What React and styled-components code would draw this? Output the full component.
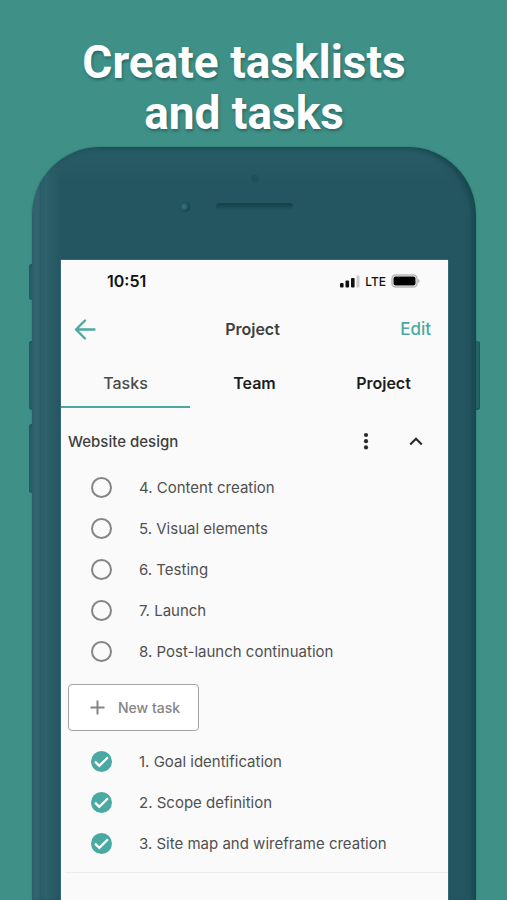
import React, { useState } from "react";
import styled, { createGlobalStyle, css } from "styled-components";

const color = {
  page: "#3f9188",
  phone: "#245661",
  screen: "#fafafa",
  accent: "#4aa9a2",
  ink: "#3f3f3f",
  task: "#505050",
};

const GlobalStyle = createGlobalStyle`
  *, *::before, *::after { box-sizing: border-box; }
  html, body, #root { height: 100%; }
  body {
    margin: 0;
    background: ${color.page};
    font-family: Inter, "Liberation Sans", sans-serif;
  }
  button { font: inherit; }
`;

const Page = styled.main`
  display: flex;
  flex-direction: column;
  min-height: 100vh;
  padding: 37px 31px 0 32px;
  gap: 8px;
  overflow: hidden;
`;

const Headline = styled.h1`
  margin: 0;
  padding-right: 20px;
  color: #fff;
  font: 700 46px/51px Roboto, sans-serif;
  text-align: center;
  text-shadow: 1px 2px 3px rgba(20, 60, 60, 0.5);
`;

const Phone = styled.section`
  position: relative;
  flex: 1;
  display: flex;
  flex-direction: column;
  padding: 0 28px 0 29px;
  border-radius: 68px 68px 0 0;
  background:
    linear-gradient(90deg, #2c616b 0, #33656f 5px, #2c606b 8px, #255761 9px, #30636e 10px, #2c5f6a 11px, #275a65 12px, #30636e 13px, #2b5d68 18px, rgba(36, 86, 97, 0) 29px),
    linear-gradient(180deg, #285c66 0, ${color.phone} 36px);
  box-shadow:
    inset -5px 2px 5px -1px #18474f,
    0 0 2px rgba(22, 72, 77, 0.5);
`;

const SideKey = styled.span`
  position: absolute;
  z-index: -1;
  top: ${(p) => p.$top}px;
  height: ${(p) => p.$length}px;
  width: 6px;
  border-radius: 3px;
  background: #27646a;
  ${(p) =>
    p.$side === "left"
      ? css`left: -3px; box-shadow: inset 1px 1px 1px #1e5a60;`
      : css`right: -4px; box-shadow: inset -1px -1px 1px #1b535a;`}
`;

const Bezel = styled.div`
  height: 113px;
  display: flex;
  justify-content: center;
`;

const BezelArt = styled.svg`
  display: block;
  width: 150px;
  height: 80px;
`;

const Screen = styled.div`
  flex: 1;
  background: ${color.screen};
  box-shadow: 0 0 1px #8fc5c3;
`;

const StatusBar = styled.div`
  display: flex;
  align-items: center;
  justify-content: space-between;
  height: 42px;
  padding: 0 28px 0 46px;
  color: #111;
  font-size: 16px;
  font-weight: 600;
`;

const StatusIcons = styled.div`
  display: flex;
  align-items: center;
  gap: 5px;
  font-size: 12px;
  font-weight: 500;
  svg { display: block; }
`;

const Header = styled.header`
  display: grid;
  grid-template-columns: 1fr auto 1fr;
  align-items: center;
  height: 54px;
  padding: 0 17px 0 13px;
`;

const Title = styled.h2`
  margin: 0;
  color: ${color.ink};
  font-size: 16px;
  font-weight: 600;
`;

const PlainButton = styled.button`
  display: grid;
  place-items: center;
  padding: 0;
  border: 0;
  background: none;
  color: ${(p) => (p.$accent ? color.accent : "#2b2b2b")};
  font-size: 17px;
  font-weight: 500;
  cursor: pointer;
  justify-self: ${(p) => p.$align || "auto"};
  svg { display: block; }
`;

const Tabs = styled.div`
  display: grid;
  grid-template-columns: repeat(3, 1fr);
`;

const Tab = styled.button`
  height: 52px;
  padding: 3px 0 0;
  border: 0;
  border-bottom: 2px solid ${(p) => (p.$active ? color.accent : "transparent")};
  background: none;
  color: ${(p) => (p.$active ? "#4a4a4a" : "#1d1d1d")};
  font-size: 16px;
  font-weight: ${(p) => (p.$active ? 500 : 600)};
  cursor: pointer;
`;

const ListHeader = styled.div`
  display: flex;
  align-items: center;
  height: 59px;
  padding: 7px 20px 0 7px;
  gap: 28px;
`;

const ListTitle = styled.h3`
  flex: 1;
  margin: 0;
  color: ${color.ink};
  font-size: 15px;
  font-weight: 500;
`;

const TaskList = styled.ul`
  margin: 0;
  padding: 0;
  list-style: none;
`;

const TaskRow = styled.label`
  display: flex;
  align-items: center;
  gap: 27px;
  height: 41px;
  padding: 0 8px 0 30px;
  color: ${color.task};
  font-size: 15px;
  white-space: nowrap;
  cursor: pointer;
`;

const Tick = styled.span`
  display: grid;
  > * { grid-area: 1 / 1; }
  svg { pointer-events: none; }
`;

const TickInput = styled.input`
  appearance: none;
  width: 21px;
  height: 21px;
  margin: 0;
  border: 2px solid #858585;
  border-radius: 50%;
  cursor: pointer;
  &:checked {
    border-color: ${color.accent};
    background: ${color.accent};
  }
`;

const NewTask = styled.button`
  display: flex;
  align-items: center;
  gap: 12px;
  height: 47px;
  margin: 12px 0 10px 7px;
  padding: 0 18px 0 20px;
  border: 1px solid #a3a3a3;
  border-radius: 4px;
  background: #fff;
  color: #858585;
  font-size: 14px;
  font-weight: 500;
  cursor: pointer;
`;

const Divider = styled.hr`
  margin: 8px 0 0 4px;
  border: 0;
  border-top: 1px solid #ececec;
`;

const SIDE_KEYS = [
  { side: "left", top: 117, length: 36 },
  { side: "left", top: 194, length: 69 },
  { side: "left", top: 277, length: 69 },
  { side: "right", top: 194, length: 69 },
];

const TABS = ["Tasks", "Team", "Project"];

const TASKS = [
  { title: "4. Content creation", done: false },
  { title: "5. Visual elements", done: false },
  { title: "6. Testing", done: false },
  { title: "7. Launch", done: false },
  { title: "8. Post-launch continuation", done: false },
  { title: "1. Goal identification", done: true },
  { title: "2. Scope definition", done: true },
  { title: "3. Site map and wireframe creation", done: true },
];

function Task({ title, done, onToggle }) {
  return (
    <li>
      <TaskRow>
        <Tick>
          <TickInput type="checkbox" checked={done} onChange={onToggle} />
          {done && (
            <svg width="21" height="21" viewBox="0 0 21 21" fill="none" stroke="#fff" strokeWidth="2.3" aria-hidden="true">
              <path d="M4 10.6 8.3 14.8 17 6.2" />
            </svg>
          )}
        </Tick>
        {title}
      </TaskRow>
    </li>
  );
}

export default function App() {
  const [active, setActive] = useState("Tasks");
  const [tasks, setTasks] = useState(TASKS);
  const toggle = (title) =>
    setTasks((all) => all.map((t) => (t.title === title ? { ...t, done: !t.done } : t)));
  const renderTasks = (done) =>
    tasks
      .filter((t) => t.done === done)
      .map((t) => <Task key={t.title} {...t} onToggle={() => toggle(t.title)} />);

  return (
    <>
      <GlobalStyle />
      <Page>
        <Headline>
          Create tasklists
          <br />
          and tasks
        </Headline>
        <Phone>
          {SIDE_KEYS.map((k) => (
            <SideKey key={k.side + k.top} $side={k.side} $top={k.top} $length={k.length} />
          ))}
          <Bezel>
            <BezelArt viewBox="0 0 150 80" aria-hidden="true">
              <defs>
                <radialGradient id="lens" cx="0.4" cy="0.45" r="0.6">
                  <stop offset="0" stopColor="#3b7883" />
                  <stop offset="0.45" stopColor="#25606a" />
                  <stop offset="1" stopColor="#133f49" />
                </radialGradient>
                <linearGradient id="slot" x1="0" y1="0" x2="0" y2="1">
                  <stop offset="0" stopColor="#153f49" />
                  <stop offset="0.5" stopColor="#1b4a54" />
                  <stop offset="1" stopColor="#225460" />
                </linearGradient>
              </defs>
              <circle cx="75" cy="32" r="4" fill="#1f4f59" />
              <circle cx="5" cy="60" r="5" fill="url(#lens)" />
              <rect x="36" y="56" width="77" height="7" rx="3.5" fill="url(#slot)" />
            </BezelArt>
          </Bezel>
          <Screen>
            <StatusBar>
              <span>10:51</span>
              <StatusIcons>
                <svg width="20" height="13" viewBox="0 0 20 13" aria-hidden="true">
                  <rect x="0" y="8" width="3.6" height="4.5" rx="1" fill="#111" />
                  <rect x="5.5" y="5.5" width="3.6" height="7" rx="1" fill="#111" />
                  <rect x="11" y="3" width="3.6" height="9.5" rx="1" fill="#111" />
                  <rect x="16.5" y="0.5" width="3" height="12" rx="1" fill="#ccc" />
                </svg>
                LTE
                <svg width="29" height="14" viewBox="0 0 29 14" aria-hidden="true">
                  <rect x="1" y="1" width="25" height="12" rx="3.5" fill="#fafafa" stroke="#b8b8b8" strokeWidth="1.5" />
                  <rect x="2.5" y="2.5" width="22" height="9" rx="2" fill="#000" />
                  <path d="M27.3 5v4c1.5-.6 1.5-3.4 0-4z" fill="#999" />
                </svg>
              </StatusIcons>
            </StatusBar>
            <Header>
              <PlainButton type="button" $accent $align="start" aria-label="Back">
                <svg width="22" height="22" viewBox="0 0 22 22" fill="none" stroke="currentColor" strokeWidth="2.3" strokeLinecap="round" strokeLinejoin="round" aria-hidden="true">
                  <path d="M20.5 11.5H2M11 2.5 2 11.5 11 20.5" />
                </svg>
              </PlainButton>
              <Title>Project</Title>
              <PlainButton type="button" $accent $align="end">Edit</PlainButton>
            </Header>
            <Tabs role="tablist">
              {TABS.map((name) => (
                <Tab
                  key={name}
                  type="button"
                  role="tab"
                  aria-selected={name === active}
                  $active={name === active}
                  onClick={() => setActive(name)}
                >
                  {name}
                </Tab>
              ))}
            </Tabs>
            <ListHeader>
              <ListTitle>Website design</ListTitle>
              <PlainButton type="button" aria-label="List options">
                <svg width="20" height="20" viewBox="0 0 20 20" fill="currentColor" aria-hidden="true">
                  <circle cx="10" cy="4" r="2.1" />
                  <circle cx="10" cy="10.2" r="2.1" />
                  <circle cx="10" cy="16.4" r="2.1" />
                </svg>
              </PlainButton>
              <PlainButton type="button" aria-label="Collapse list">
                <svg width="24" height="20" viewBox="0 0 24 20" fill="none" stroke="currentColor" strokeWidth="2.2" aria-hidden="true">
                  <path d="M6.200 13.5 12 7.700 17.800 13.5" />
                </svg>
              </PlainButton>
            </ListHeader>
            <TaskList>{renderTasks(false)}</TaskList>
            <NewTask type="button">
              <svg width="17" height="17" viewBox="0 0 17 17" fill="none" stroke="currentColor" strokeWidth="2" aria-hidden="true">
                <path d="M8.5 1.5v14M1.5 8.5h14" />
              </svg>
              New task
            </NewTask>
            <TaskList>{renderTasks(true)}</TaskList>
            <Divider />
          </Screen>
        </Phone>
      </Page>
    </>
  );
}
